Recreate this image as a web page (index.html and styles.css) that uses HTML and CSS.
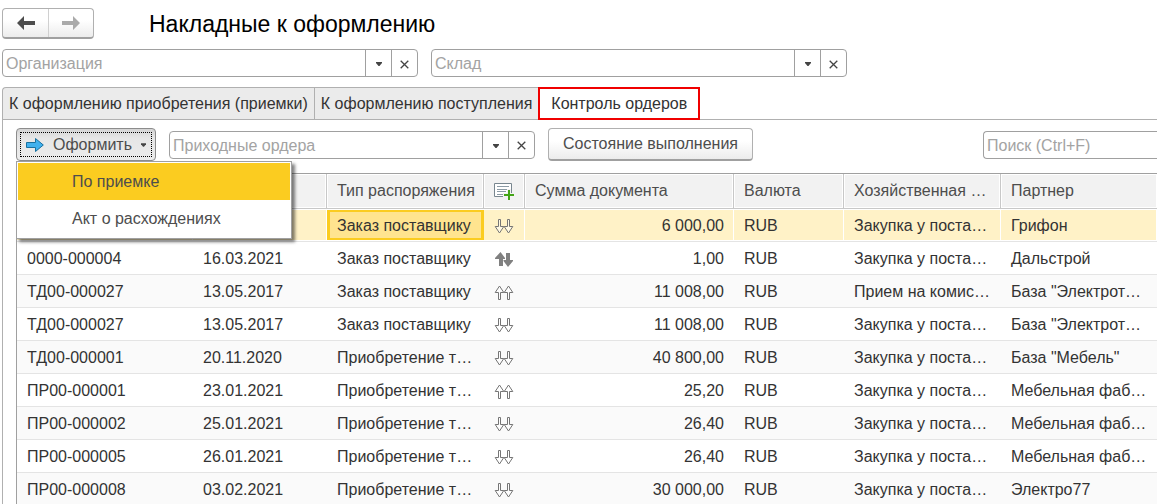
FILE: index.html
```html
<!DOCTYPE html>
<html lang="ru">
<head>
<meta charset="utf-8">
<title>Накладные к оформлению</title>
<link rel="stylesheet" href="styles.css">
</head>
<body>
<svg class="sprite" aria-hidden="true">
  <symbol id="caret" viewBox="0 0 6 4"><path d="M0 0h6v1L3.500 4h-1L0 1z" fill="#444"/></symbol>
  <symbol id="cross" viewBox="0 0 9 9"><path d="M.7.7l7.600 7.600M8.300.7L.7 8.300" stroke="#444" stroke-width="1.300" fill="none"/></symbol>
  <symbol id="down" viewBox="0 0 20 15"><path d="M4.500.5h2v7h3.300L5.500 14 1.200 7.500h3.300zM13.500.5h2v7h3.300L14.500 14 10.200 7.500h3.300z" fill="#fff" fill-opacity=".5" stroke="#757575"/></symbol>
  <symbol id="up" viewBox="0 0 20 15"><path d="M4.500 14.500h2v-7h3.300L5.500 1 1.200 7.500h3.300zM13.500 14.500h2v-7h3.300L14.500 1 10.200 7.500h3.300z" fill="#fff" fill-opacity=".5" stroke="#757575"/></symbol>
  <symbol id="both" viewBox="0 0 20 15"><path d="M6.500 0L11 6v1H9v7H5V7H1V6zM12 1h4v7h3v1l-5 6-4.500-6V8H12z" fill="#808080"/></symbol>
</svg>
<header class="titlebar">
  <div class="nav">
    <button class="nav-button" type="button" aria-label="Назад"><svg width="18" height="14" viewBox="0 0 18 14"><path d="M0 7L7 0v5h11v4H7v5z" fill="#4d4d4d"/></svg></button>
    <button class="nav-button" type="button" aria-label="Вперед"><svg width="18" height="14" viewBox="0 0 18 14"><path d="M18 7L11 0v5H0v4h11v5z" fill="#aaa"/></svg></button>
  </div>
  <h1 class="title">Накладные к оформлению</h1>
</header>
<div class="filters">
  <div class="field field-wide">
    <input class="field-input" type="text" placeholder="Организация" aria-label="Организация">
    <button class="field-button" type="button" aria-label="Выбрать организацию"><svg width="6" height="4"><use href="#caret"/></svg></button>
    <button class="field-button" type="button" aria-label="Очистить организацию"><svg width="9" height="9"><use href="#cross"/></svg></button>
  </div>
  <div class="field field-wide">
    <input class="field-input" type="text" placeholder="Склад" aria-label="Склад">
    <button class="field-button" type="button" aria-label="Выбрать склад"><svg width="6" height="4"><use href="#caret"/></svg></button>
    <button class="field-button" type="button" aria-label="Очистить склад"><svg width="9" height="9"><use href="#cross"/></svg></button>
  </div>
</div>
<nav class="tabs" role="tablist">
  <button class="tab" type="button" role="tab">К оформлению приобретения (приемки)</button>
  <button class="tab" type="button" role="tab">К оформлению поступления</button>
  <button class="tab tab-active" type="button" role="tab" aria-selected="true">Контроль ордеров</button>
</nav>
<main class="panel">
  <div class="toolbar">
    <div class="dropdown">
      <button class="button button-open" type="button" aria-expanded="true">
        <svg width="18" height="14" viewBox="0 0 18 14"><path d="M.5 4.500h9v-4L17.300 7 9.500 13.500v-4h-9z" fill="#41b1ee" stroke="#19709f"/></svg>
        <span>Оформить</span>
        <svg width="5" height="4"><use href="#caret"/></svg>
      </button>
      <div class="menu" role="menu">
        <button class="menu-item menu-item-active" type="button" role="menuitem">По приемке</button>
        <button class="menu-item" type="button" role="menuitem">Акт о расхождениях</button>
      </div>
    </div>
    <div class="field field-orders">
      <input class="field-input" type="text" placeholder="Приходные ордера" aria-label="Приходные ордера">
      <button class="field-button" type="button" aria-label="Выбрать ордера"><svg width="6" height="4"><use href="#caret"/></svg></button>
      <button class="field-button" type="button" aria-label="Очистить ордера"><svg width="9" height="9"><use href="#cross"/></svg></button>
    </div>
    <button class="button" type="button">Состояние выполнения</button>
    <div class="field field-search">
      <input class="field-input" type="text" placeholder="Поиск (Ctrl+F)" aria-label="Поиск">
    </div>
  </div>
  <div class="grid">
    <table class="table">
      <colgroup><col class="c-number"><col class="c-date"><col class="c-type"><col class="c-state"><col class="c-sum"><col class="c-currency"><col class="c-operation"><col></colgroup>
      <thead>
        <tr><th>Номер</th><th>Дата</th><th>Тип распоряжения</th><th class="icon"><svg width="20" height="17" viewBox="0 0 20 17"><path d="M.5.5h17v13H.5z" fill="#fff" stroke="#78868f"/><path d="M3 3.500h12M3 6.500h12M3 8.500h9M3 11.500h8" stroke="#8c9ba5" fill="none"/><path d="M9 10h4V6h4v4h3v4h-3v3h-4v-3H9z" fill="#f2f2f2"/><path d="M10 12h10M15 7v10" stroke="#43a516" stroke-width="2"/></svg></th><th>Сумма документа</th><th>Валюта</th><th>Хозяйственная …</th><th>Партнер</th></tr>
      </thead>
      <tbody>
        <tr class="selected"><td></td><td></td><td class="current">Заказ поставщику</td><td class="icon"><svg width="20" height="15"><use href="#down"/></svg></td><td class="sum">6 000,00</td><td>RUB</td><td>Закупка у поста…</td><td>Грифон</td></tr>
        <tr><td>0000-000004</td><td>16.03.2021</td><td>Заказ поставщику</td><td class="icon"><svg width="20" height="15"><use href="#both"/></svg></td><td class="sum">1,00</td><td>RUB</td><td>Закупка у поста…</td><td>Дальстрой</td></tr>
        <tr><td>ТД00-000027</td><td>13.05.2017</td><td>Заказ поставщику</td><td class="icon"><svg width="20" height="15"><use href="#up"/></svg></td><td class="sum">11 008,00</td><td>RUB</td><td>Прием на комис…</td><td>База "Электрот…</td></tr>
        <tr><td>ТД00-000027</td><td>13.05.2017</td><td>Заказ поставщику</td><td class="icon"><svg width="20" height="15"><use href="#down"/></svg></td><td class="sum">11 008,00</td><td>RUB</td><td>Закупка у поста…</td><td>База "Электрот…</td></tr>
        <tr><td>ТД00-000001</td><td>20.11.2020</td><td>Приобретение т…</td><td class="icon"><svg width="20" height="15"><use href="#down"/></svg></td><td class="sum">40 800,00</td><td>RUB</td><td>Закупка у поста…</td><td>База "Мебель"</td></tr>
        <tr><td>ПР00-000001</td><td>23.01.2021</td><td>Приобретение т…</td><td class="icon"><svg width="20" height="15"><use href="#up"/></svg></td><td class="sum">25,20</td><td>RUB</td><td>Закупка у поста…</td><td>Мебельная фаб…</td></tr>
        <tr><td>ПР00-000002</td><td>25.01.2021</td><td>Приобретение т…</td><td class="icon"><svg width="20" height="15"><use href="#down"/></svg></td><td class="sum">26,40</td><td>RUB</td><td>Закупка у поста…</td><td>Мебельная фаб…</td></tr>
        <tr><td>ПР00-000005</td><td>26.01.2021</td><td>Приобретение т…</td><td class="icon"><svg width="20" height="15"><use href="#down"/></svg></td><td class="sum">26,40</td><td>RUB</td><td>Закупка у поста…</td><td>Мебельная фаб…</td></tr>
        <tr><td>ПР00-000008</td><td>03.02.2021</td><td>Приобретение т…</td><td class="icon"><svg width="20" height="15"><use href="#down"/></svg></td><td class="sum">30 000,00</td><td>RUB</td><td>Закупка у поста…</td><td>Электро77</td></tr>
      </tbody>
    </table>
  </div>
</main>
</body>
</html>
```
FILE: styles.css
```css
* {
  box-sizing: border-box;
}

body {
  display: flex;
  flex-direction: column;
  height: 100vh;
  margin: 0;
  padding: 8px 0 0 2px;
  overflow: hidden;
  background: #fff;
  color: #333;
  font: 16px/20px "Liberation Sans", Arial, sans-serif;
}

button,
input {
  margin: 0;
  color: inherit;
  font: inherit;
}

svg {
  display: block;
  flex: none;
}

.sprite {
  position: absolute;
  width: 0;
  height: 0;
}

.titlebar {
  display: flex;
  align-items: center;
  gap: 55px;
}

.nav {
  display: flex;
  border: 1px solid #b0b0b0;
  border-bottom: 2px solid #a0a0a0;
  border-radius: 4px;
  background: linear-gradient(#fff 40%, #ececec);
}

.nav-button {
  display: flex;
  align-items: center;
  justify-content: center;
  width: 45px;
  height: 28px;
  padding: 0;
  border: 0;
  background: none;
}

.nav-button + .nav-button {
  border-left: 1px solid #d0d0d0;
}

.title {
  margin: 0;
  color: #000;
  font-size: 23px;
  font-weight: 400;
  line-height: 30px;
}

.filters {
  display: flex;
  gap: 13px;
  padding-top: 10px;
}

.field {
  display: flex;
  height: 28px;
  border: 1px solid #a0a0a0;
  border-radius: 4px;
  background: #fff;
}

.field-wide {
  width: 416px;
}

.field-orders {
  width: 366px;
}

.field-search {
  width: 174px;
  margin-left: auto;
  border-right: 0;
  border-radius: 4px 0 0 4px;
}

.field-input {
  flex: 1;
  min-width: 0;
  padding: 2px 3px 0;
  border: 0;
  outline: 0;
  background: none;
}

.field-input::placeholder {
  color: #a3a3a3;
  opacity: 1;
}

.field-button {
  display: flex;
  align-items: center;
  justify-content: center;
  width: 26px;
  padding: 2px 0 0;
  border: 0;
  border-left: 1px solid #a0a0a0;
  background: none;
}

.tabs {
  display: flex;
  padding-top: 10px;
}

.tabs::after {
  flex: 1;
  border-bottom: 1px solid #b0b0b0;
  content: "";
}

.tab {
  height: 33px;
  padding: 0 6px;
  border: 1px solid #b0b0b0;
  border-right-width: 0;
  background: #ebebeb;
  white-space: nowrap;
}

.tab:first-child {
  border-top-left-radius: 4px;
}

.tab-active {
  padding: 0 11px;
  border: 2px solid #f00000;
  background: #fff;
}

.panel {
  display: flex;
  flex: 1;
  flex-direction: column;
  min-height: 0;
  padding: 8px 0 0 13px;
  border-left: 1px solid #b0b0b0;
}

.toolbar {
  display: flex;
  align-items: center;
  gap: 13px;
}

.dropdown {
  position: relative;
}

.button {
  display: flex;
  align-items: center;
  height: 33px;
  padding: 0 14px;
  border: 1px solid #b0b0b0;
  border-bottom: 2px solid #a0a0a0;
  border-radius: 4px;
  background: linear-gradient(#fff 40%, #ececec);
  color: #4d4d4d;
  white-space: nowrap;
}

.button-open {
  gap: 9px;
  padding: 0 9px;
  border: 1px solid #8c8c8c;
  outline: 1px dotted #000;
  outline-offset: -5px;
  background: linear-gradient(#d4d4d4, #e6e6e6 30%, #ececec);
}

.menu {
  position: absolute;
  z-index: 1;
  top: 100%;
  left: 0;
  width: 276px;
  padding: 1px;
  border: 1px solid #a0a0a0;
  background: #fff;
  box-shadow: 3px 3px 3px rgba(0, 0, 0, 0.5);
}

.menu-item {
  display: block;
  width: 100%;
  height: 37px;
  padding: 0 54px;
  border: 0;
  background: none;
  color: #4d4d4d;
  text-align: left;
}

.menu-item-active {
  background: #fbcc20;
}

.grid {
  flex: 1;
  min-height: 0;
  margin-top: 12px;
  overflow: hidden;
  border: 1px solid #a0a0a0;
  border-width: 1px 0 0 1px;
}

.table {
  width: 100%;
  border-spacing: 0;
  table-layout: fixed;
}

.c-number { width: 176px; }
.c-date { width: 134px; }
.c-type { width: 157px; }
.c-state { width: 41px; }
.c-sum { width: 209px; }
.c-currency { width: 110px; }
.c-operation { width: 157px; }

th,
td {
  padding: 2px 10px 0;
  overflow: hidden;
  border-bottom: 1px solid #e4e4e4;
  font-weight: 400;
  text-align: left;
  white-space: nowrap;
}

th {
  height: 35px;
  padding-top: 0;
  border-right: 1px solid #c8c8c8;
  border-bottom-color: #c8c8c8;
  background: #f2f2f2;
  box-shadow: inset 0 0 0 1px #fff;
  color: #4d4d4d;
}

th:last-child {
  border-right: 0;
}

td {
  height: 33px;
}

tr:nth-child(odd) td {
  background: #fafafa;
}

.selected td,
.selected:nth-child(odd) td {
  background: #fff2c7;
  box-shadow: inset -1px 0 #fff, inset 0 1px #fff, inset 0 -1px #fff;
}

.selected:nth-child(odd) .current {
  background: #ffe48f;
  box-shadow: inset 0 1px #fff, inset 0 -1px #fff, inset 0 0 0 3px #fbcc20;
}

td.sum {
  text-align: right;
}

.icon {
  padding-right: 9px;
  padding-left: 10px;
}
```
